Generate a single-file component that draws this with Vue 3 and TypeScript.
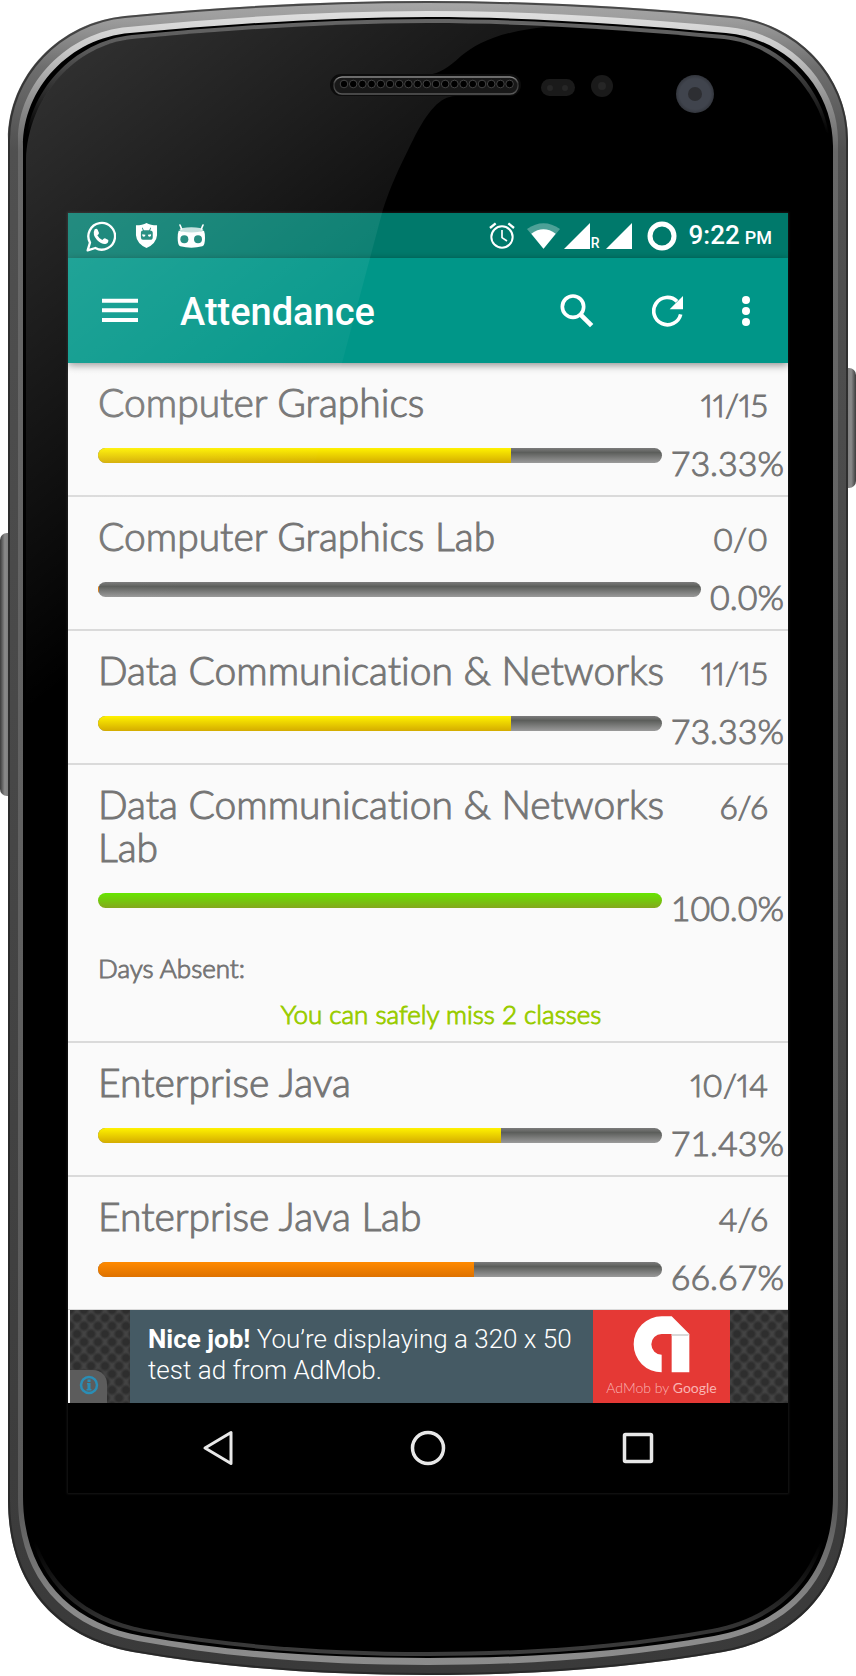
<script setup lang="ts">
type Level = 'low' | 'mid' | 'high'

interface Subject {
  name: string
  attended: number
  total: number
  note?: string
}

const subjects: Subject[] = [
  { name: 'Computer Graphics', attended: 11, total: 15 },
  { name: 'Computer Graphics Lab', attended: 0, total: 0 },
  { name: 'Data Communication & Networks', attended: 11, total: 15 },
  {
    name: 'Data Communication & Networks Lab',
    attended: 6,
    total: 6,
    note: 'You can safely miss 2 classes',
  },
  { name: 'Enterprise Java', attended: 10, total: 14 },
  { name: 'Enterprise Java Lab', attended: 4, total: 6 },
]

function percent(s: Subject): number {
  return s.total === 0 ? 0 : (s.attended / s.total) * 100
}

function label(s: Subject): string {
  const p = percent(s)
  return (Number.isInteger(p) ? p.toFixed(1) : p.toFixed(2)) + '%'
}

function level(s: Subject): Level {
  const p = percent(s)
  if (p >= 75) return 'high'
  return p >= 70 ? 'mid' : 'low'
}

// Speaker grille: evenly spaced holes
const holes = Array.from({ length: 19 }, (_, i) => 344 + i * 9.2)
</script>

<template>
  <div class="phone">
    <svg class="layer" viewBox="0 0 856 1676" preserveAspectRatio="none" aria-hidden="true">
      <defs>
        <linearGradient id="rim" gradientUnits="userSpaceOnUse" x1="0" y1="0" x2="0" y2="1676">
          <stop offset="0" stop-color="#a8a8a8" />
          <stop offset="0.012" stop-color="#9c9c9c" />
          <stop offset="0.04" stop-color="#6e6e6e" />
          <stop offset="0.09" stop-color="#505050" />
          <stop offset="1" stop-color="#3a3a3a" />
        </linearGradient>
        <linearGradient id="bevel" gradientUnits="userSpaceOnUse" x1="0" y1="0" x2="0" y2="1676">
          <stop offset="0" stop-color="#e6e6e6" />
          <stop offset="0.03" stop-color="#c8c8c8" />
          <stop offset="0.06" stop-color="#909090" />
          <stop offset="0.09" stop-color="#686868" />
          <stop offset="0.9" stop-color="#5a5a5a" />
          <stop offset="0.96" stop-color="#8a8a8a" />
          <stop offset="1" stop-color="#8c8c8c" />
        </linearGradient>
        <linearGradient id="lip" gradientUnits="userSpaceOnUse" x1="0" y1="0" x2="0" y2="1676">
          <stop offset="0" stop-color="#6c6c6c" />
          <stop offset="0.03" stop-color="#5a5a5a" />
          <stop offset="0.08" stop-color="#000" />
          <stop offset="0.92" stop-color="#000" />
          <stop offset="0.97" stop-color="#333" />
          <stop offset="1" stop-color="#444" />
        </linearGradient>
        <linearGradient id="keyLeft" x1="0" y1="0" x2="1" y2="0">
          <stop offset="0" stop-color="#3c3c3c" />
          <stop offset="0.3" stop-color="#8a8a8a" />
          <stop offset="1" stop-color="#6a6a6a" />
        </linearGradient>
        <linearGradient id="keyRight" x1="0" y1="0" x2="1" y2="0">
          <stop offset="0" stop-color="#6a6a6a" />
          <stop offset="0.7" stop-color="#8a8a8a" />
          <stop offset="1" stop-color="#3c3c3c" />
        </linearGradient>
      </defs>
      <rect x="0" y="533" width="16" height="263" rx="7" fill="url(#keyLeft)" />
      <rect x="840" y="368" width="16" height="120" rx="7" fill="url(#keyRight)" />
      <path
        fill="url(#rim)"
        d="M8 140C8 75 60 22 125 16C230 6 330 1 428 1S626 6 731 16C796 22 848 75 848 140V1500C848 1585 800 1638 723 1652C620 1670 520 1675 428 1675S236 1670 133 1652C56 1638 8 1585 8 1500Z"
      />
      <path
        fill="none"
        stroke="#222"
        stroke-opacity="0.7"
        stroke-width="2"
        d="M9 140C9 76 61 23 125 17C230 7 330 2 428 2S626 7 731 17C795 23 847 76 847 140V1500C847 1584 799 1637 723 1651C620 1669 520 1674 428 1674S236 1669 133 1651C57 1637 9 1584 9 1500Z"
      />
      <path
        fill="url(#bevel)"
        d="M18 140C18 83 68 32 128 27C230 17 330 11 428 11S626 17 728 27C788 32 838 83 838 140V1498C838 1576 793 1627 718 1641C620 1659 520 1665 428 1665S236 1659 138 1641C63 1627 18 1576 18 1498Z"
      />
      <path
        fill="#000"
        d="M23 146C23 88 70 38 130 33C230 24 330 17 428 17S626 24 726 33C786 38 833 88 833 146V1496C833 1573 788 1623 714 1636C620 1653 520 1658 428 1658S236 1653 142 1636C68 1623 23 1573 23 1496Z"
      />
      <path
        fill="url(#lip)"
        d="M26 150C26 92 74 41 132 35C230 26 330 19 428 19S626 26 724 35C782 41 830 92 830 150V1492C830 1570 786 1620 712 1633C620 1650 520 1656 428 1656S236 1650 144 1633C70 1620 26 1570 26 1492Z"
      />
      <path
        fill="#000"
        d="M26 160C28 96 76 45 132 39C230 30 330 23 428 23S626 30 724 39C780 45 828 96 830 160V1482C828 1566 784 1615 712 1629C620 1646 520 1652 428 1652S236 1646 144 1629C72 1615 28 1566 26 1482Z"
      />
    </svg>

    <main class="screen">
      <div class="status">
        <svg width="30" height="32" viewBox="80 42 90 96" aria-label="Message">
          <path fill="none" stroke="#fff" stroke-width="7" stroke-linejoin="round" d="M85 133l7-23a40 40 0 1 1 16 16z" />
          <path fill="#fff" d="M106 70q6-4 9 1l4 10q0 4-5 7q5 10 15 14q5-6 8-5l10 5q1 10-9 12q-12 1-25-12q-15-16-7-32z" />
        </svg>
        <svg width="23" height="25" viewBox="226 53 68 76" aria-label="Privacy guard">
          <path fill="#fff" d="M260 53q12 7 32 7v30q-2 25-32 39q-30-14-32-39v-30q20 0 32-7z" />
          <path fill="#108274" d="M243 82q0-6 6-6l-3-8 2-1 4 8h16l4-8 2 1-3 8q8 0 8 6v14q0 8-8 8h-22q-6 0-6-8z" />
          <path fill="#fff" d="M247 87l10 2q-1 7-6 6q-5-1-4-8zM274 87l-10 2q1 7 6 6q5-1 4-8z" />
        </svg>
        <svg width="28" height="24" viewBox="352 53 84 72" aria-label="System">
          <path stroke="#fff" stroke-width="5" stroke-linecap="round" d="M361 56l5 12M430 56l-5 12" />
          <ellipse cx="395" cy="71" rx="36" ry="8" fill="#fff" fill-opacity="0.75" />
          <path fill="#fff" d="M357 73q38 10 76 0q3 7 3 22q0 22-8 25q-33 8-66 0q-8-3-8-25q0-15 3-22z" />
          <circle cx="374" cy="99" r="12" fill="#108274" />
          <circle cx="415" cy="99" r="12" fill="#108274" />
        </svg>
        <span class="spacer"></span>
        <svg width="26" height="27" viewBox="58 51 78 81" aria-label="Alarm">
          <circle cx="97" cy="96" r="32" fill="none" stroke="#fff" stroke-width="6" />
          <path fill="none" stroke="#fff" stroke-width="5" d="M97 75v23l15 10" />
          <path fill="none" stroke="#fff" stroke-width="7" d="M61 69l17-14M116 55l17 14" />
        </svg>
        <svg class="wifi" width="33" height="26" viewBox="172 52 100 78" aria-label="Wi-Fi">
          <path fill="#fff" fill-opacity="0.3" d="M172 70q50-36 100 0l-50 60z" />
          <path fill="#fff" d="M185 84q37-27 74 0l-37 46z" />
        </svg>
        <svg class="signal" width="26" height="26" viewBox="0 0 26 26" aria-label="Signal">
          <path fill="#fff" d="M0 26L26 0v26z" />
        </svg>
        <span class="roaming">R</span>
        <svg class="signal" width="26" height="26" viewBox="0 0 26 26" aria-label="Signal">
          <path fill="#fff" d="M0 26L26 0v26z" />
        </svg>
        <svg class="battery" width="30" height="30" viewBox="0 0 30 30" aria-label="Battery">
          <circle cx="15" cy="15" r="12" fill="none" stroke="#fff" stroke-width="5" />
        </svg>
        <time class="clock">9:22<small>PM</small></time>
      </div>

      <header class="toolbar">
        <button type="button" class="tool" aria-label="Menu">
          <svg width="36" height="25" viewBox="126 276 108 75">
            <path fill="#fff" d="M126 278h108v12H126zM126 307h108v12H126zM126 336h108v12H126z" />
          </svg>
        </button>
        <h1>Attendance</h1>
        <button type="button" class="tool" aria-label="Search">
          <svg width="34" height="34" viewBox="270 261 102 102">
            <circle cx="309" cy="299" r="32" fill="none" stroke="#fff" stroke-width="11" />
            <path stroke="#fff" stroke-width="14" d="M331 322l34 34" />
          </svg>
        </button>
        <button type="button" class="tool refresh" aria-label="Refresh">
          <svg width="32" height="32" viewBox="545 265 96 96">
            <path fill="none" stroke="#fff" stroke-width="11" d="M631 323a41 41 0 1 1-11-39" />
            <path fill="#fff" d="M638 268v40h-40z" />
          </svg>
        </button>
        <button type="button" class="tool more" aria-label="More options">
          <svg width="8" height="30" viewBox="0 0 8 30">
            <circle cx="4" cy="4" r="4" fill="#fff" />
            <circle cx="4" cy="15" r="4" fill="#fff" />
            <circle cx="4" cy="26" r="4" fill="#fff" />
          </svg>
        </button>
      </header>

      <ul class="list">
        <li v-for="s in subjects" :key="s.name" class="row">
          <div class="head">
            <h2>{{ s.name }}</h2>
            <span class="count">{{ s.attended }}/{{ s.total }}</span>
          </div>
          <div class="meter">
            <div
              class="track"
              role="progressbar"
              :aria-label="s.name"
              :aria-valuenow="Math.round(percent(s))"
              aria-valuemin="0"
              aria-valuemax="100"
            >
              <div class="fill" :class="level(s)" :style="{ width: percent(s) + '%' }"></div>
            </div>
            <span class="percent">{{ label(s) }}</span>
          </div>
          <template v-if="s.note">
            <p class="absent">Days Absent:</p>
            <p class="note">{{ s.note }}</p>
          </template>
        </li>
      </ul>

      <aside class="ad">
        <div class="mesh start">
          <button type="button" class="info" aria-label="Ad information">
            <svg width="20" height="20" viewBox="0 0 20 20">
              <circle cx="10" cy="10" r="8" fill="none" stroke="#2a8db5" stroke-width="2.5" />
              <path fill="#2a8db5" d="M8.5 4.5h3v2.5h-3zM8 8h3.500v6h1v1.500h-5v-1.500h1v-4.500h-.5z" />
            </svg>
          </button>
        </div>
        <p class="adtext"><b>Nice job!</b> You’re displaying a 320 x 50 test ad from AdMob.</p>
        <div class="brand">
          <svg width="57" height="57" viewBox="609 229 171 171" aria-hidden="true">
            <path fill="#fff" d="M695 398a84 84 0 0 1 0-168h30l53 53v115h-53V283h-30a31 31 0 0 0 0 62z" />
            <path fill="#d9d9d9" d="M725 283h53l-4 6h-49z" />
          </svg>
          <span>AdMob by <b>Google</b></span>
        </div>
        <div class="mesh end"></div>
      </aside>

      <nav class="nav">
        <button type="button" aria-label="Back">
          <svg width="36" height="36" viewBox="0 0 36 36">
            <path fill="none" stroke="#e8e8e8" stroke-width="3" stroke-linejoin="round" d="M5 18L31 2.500v31z" />
          </svg>
        </button>
        <button type="button" aria-label="Home">
          <svg width="36" height="36" viewBox="0 0 36 36">
            <circle cx="18" cy="18" r="15.500" fill="none" stroke="#e8e8e8" stroke-width="3.500" />
          </svg>
        </button>
        <button type="button" aria-label="Recent apps">
          <svg width="36" height="36" viewBox="0 0 36 36">
            <rect x="4.500" y="4.500" width="27" height="27" rx="1" fill="none" stroke="#e8e8e8" stroke-width="3.500" />
          </svg>
        </button>
      </nav>
    </main>

    <svg class="layer" viewBox="0 0 856 1676" preserveAspectRatio="none" aria-hidden="true">
      <defs>
        <linearGradient id="gloss" gradientUnits="userSpaceOnUse" x1="0" y1="0" x2="354" y2="462">
          <stop offset="0" stop-color="#fff" stop-opacity="0.22" />
          <stop offset="1" stop-color="#fff" stop-opacity="0" />
        </linearGradient>
        <linearGradient id="grille" x1="0" y1="0" x2="0" y2="1">
          <stop offset="0" stop-color="#8c8c8c" />
          <stop offset="0.4" stop-color="#333" />
          <stop offset="1" stop-color="#5a5a5a" />
        </linearGradient>
        <radialGradient id="lens">
          <stop offset="0.8" stop-color="#40444d" />
          <stop offset="1" stop-color="#33363d" />
        </radialGradient>
      </defs>
      <path
        fill="url(#gloss)"
        d="M26 160C28 96 76 45 132 39C230 30 330 23 428 23C470 23 520 24 558 26C500 30 478 43 461 56C448 68 440 73 428 75V96H455C440 97 428 110 413 140C397 172 389 190 382 213L342 363L240 740H26Z"
      />
      <rect x="330" y="74" width="191" height="22" rx="11" fill="#0c0c0c" />
      <rect x="334" y="77" width="184" height="17" rx="8" fill="#181818" stroke="url(#grille)" stroke-width="1.500" />
      <circle v-for="x in holes" :key="x" :cx="x" cy="84" r="3.800" fill="#000" stroke="#4a4a4a" stroke-width="0.900" />
      <rect x="541" y="79" width="34" height="17" rx="8.500" fill="#1a1a1a" />
      <circle cx="550" cy="88" r="3" fill="#262626" />
      <circle cx="565" cy="88" r="3" fill="#262626" />
      <circle cx="602" cy="86" r="11" fill="#1a1a1a" />
      <circle cx="602" cy="86" r="4" fill="#262626" />
      <circle cx="695" cy="94" r="19" fill="url(#lens)" />
      <circle cx="695" cy="94" r="7" fill="#2d2e32" />
    </svg>
  </div>
</template>

<style>
body {
  margin: 0;
  background: #fff;
}
</style>

<style scoped>
.phone {
  position: relative;
  box-sizing: border-box;
  padding: 213px 68px 183px;
}

/* The case sits behind the screen, the glass reflection over it */
.layer {
  position: absolute;
  inset: 0;
  width: 100%;
  height: 100%;
  pointer-events: none;
}

.screen {
  position: relative;
  z-index: 0;
  background: #fafafa;
  color: #757575;
  font-family: Lato, 'Noto Sans', sans-serif;
  font-weight: 300;
  font-variant-ligatures: none;
  box-shadow: 0 0 2px 1px #161616;
}

svg {
  display: block;
  flex: none;
}

button {
  display: flex;
  align-items: center;
  justify-content: center;
  padding: 0;
  border: 0;
  background: none;
  cursor: pointer;
}

.status {
  display: flex;
  align-items: center;
  gap: 19px;
  height: 45px;
  padding: 0 16px 0 18px;
  background: #00796b;
  color: #fff;
  font-family: Roboto, sans-serif;
  font-weight: 500;
}

.spacer {
  flex: 1;
}

.status .wifi {
  margin-left: -7px;
}

.status .signal {
  margin-left: -15px;
}

.roaming {
  align-self: flex-end;
  margin: 0 2px 7px -18px;
  font-size: 14px;
  line-height: 16px;
}

.battery {
  margin-left: -4px;
}

.clock {
  margin-left: -7px;
  padding-top: 2px;
  font-size: 26px;
  line-height: 47px;
  white-space: nowrap;
}

.clock small {
  margin-left: 5px;
  font-size: 18px;
}

.toolbar {
  position: relative;
  z-index: 1;
  display: flex;
  align-items: center;
  height: 105px;
  padding: 0 26px 0 24px;
  background: #009688;
  box-shadow: 0 2px 8px rgba(0, 0, 0, 0.45);
  color: #fff;
}

.tool {
  width: 56px;
  height: 56px;
}

.toolbar h1 {
  flex: 1;
  margin: 0 0 0 32px;
  padding-top: 2px;
  font: 500 38px/56px Roboto, sans-serif;
}

.refresh {
  margin-left: 35px;
}

.more {
  width: 32px;
  margin-left: 34px;
}

.list {
  margin: 0;
  padding: 0;
  list-style: none;
  /* thickens the light weight to a book weight */
  -webkit-text-stroke: 1px currentColor;
}

.row {
  padding: 18px 4px 0 30px;
  border-bottom: 2px solid #dadada;
}

.row:last-child {
  border-bottom-width: 1px;
}

.head {
  display: flex;
  align-items: baseline;
  gap: 8px;
  padding-right: 16px;
}

h2 {
  flex: 1;
  margin: 0;
  font-size: 39px;
  line-height: 43px;
  font-weight: 300;
}

.count {
  font-size: 32px;
  line-height: 36px;
  font-variant-numeric: proportional-nums;
}

.meter {
  display: flex;
  gap: 9px;
  height: 47px;
  padding-top: 24px;
}

.track {
  flex: 1;
  height: 15px;
  border-radius: 8px;
  overflow: hidden;
  background: linear-gradient(#7c7c7c, #5c5e5b 30%, #9a9a9a);
}

.fill {
  height: 100%;
  min-width: 1px;
}

.low {
  background: linear-gradient(#ff8a00, #de7200);
}

.mid {
  background: linear-gradient(#fff200, #d4ac00);
}

.high {
  background: linear-gradient(#66e600, #84a81c);
}

.percent {
  font-size: 34px;
  line-height: 30px;
}

.absent,
.note {
  margin: 0;
  font-size: 26px;
  line-height: 46px;
}

.absent {
  padding-top: 5px;
}

.note {
  padding-bottom: 4px;
  color: #99cc00;
  text-align: center;
}

.ad {
  display: flex;
  height: 93px;
  padding-left: 2px;
}

.mesh {
  display: flex;
  align-items: flex-end;
  background-color: #434343;
  background-image: radial-gradient(circle at 50% 50%, #2e2e2e 3px, transparent 6px),
    radial-gradient(circle at 50% 50%, #2e2e2e 3px, transparent 6px);
  background-position: 0 0, 7px 8px;
  background-size: 14px 16px;
}

.start {
  width: 60px;
}

.end {
  width: 58px;
}

.info {
  width: 37px;
  height: 33px;
  padding-bottom: 3px;
  border-radius: 0 14px 0 0;
  background: #5c5c5c;
}

.adtext {
  flex: 1;
  box-sizing: border-box;
  margin: 0;
  padding: 14px 12px 0 18px;
  background: #455a64;
  color: #fff;
  font: 300 26px/31px Roboto, sans-serif;
}

.adtext b {
  font-weight: 700;
}

.brand {
  display: flex;
  flex-direction: column;
  align-items: center;
  gap: 5px;
  box-sizing: border-box;
  width: 137px;
  padding-top: 6px;
  background: #e53935;
  color: #f9b4b2;
  font-size: 14px;
  line-height: 20px;
}

.brand b {
  font-weight: 400;
}

.nav {
  display: flex;
  height: 90px;
  padding: 0 45px;
  background: #000;
}

.nav button {
  flex: 1;
}
</style>
